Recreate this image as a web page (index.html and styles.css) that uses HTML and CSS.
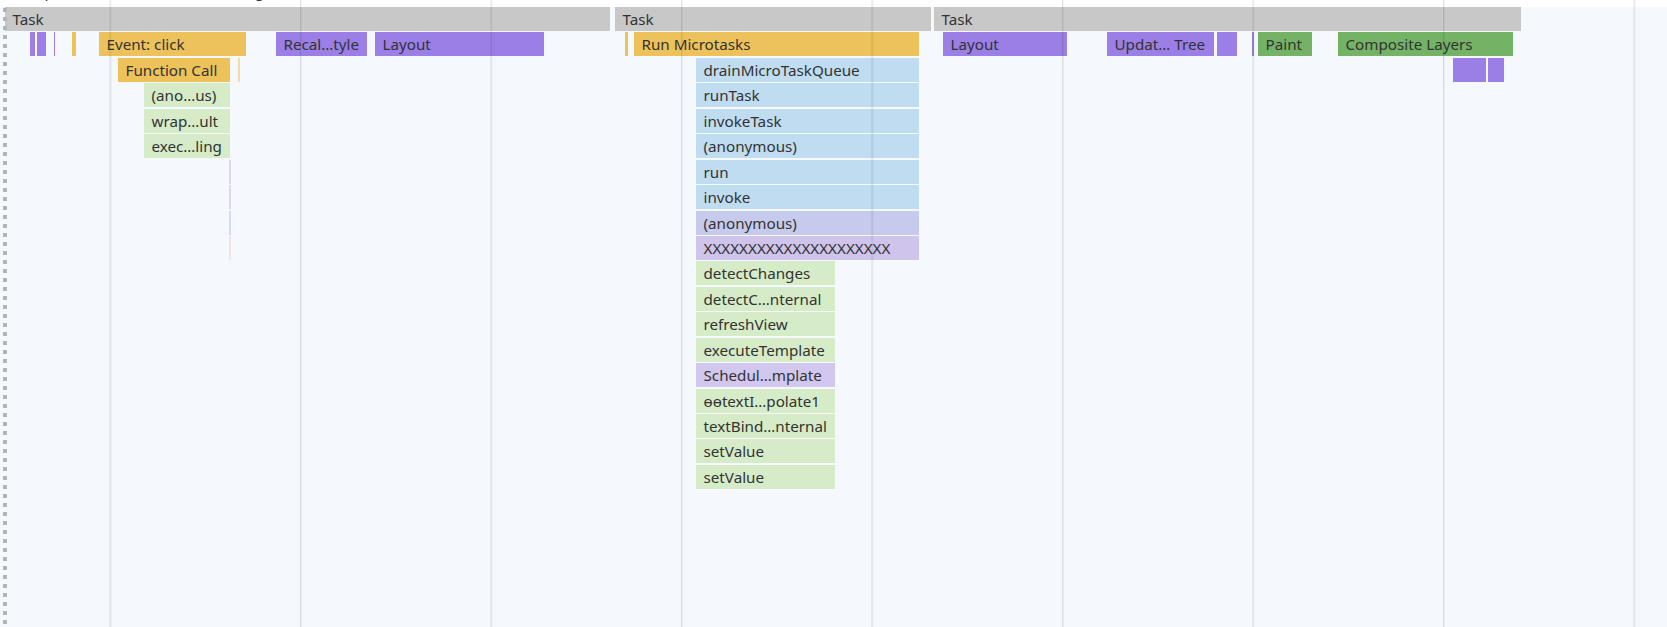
FILE: index.html
```html
<!DOCTYPE html>
<html lang="en">
<head>
  <meta charset="UTF-8">
  <meta name="viewport" content="width=device-width, initial-scale=1">
  <title>Performance - Main</title>
  <link rel="stylesheet" href="styles.css">
</head>
<body>
  <div class="timeline">
    <div class="caption">
      <div class="caption-line">
        <span class="cap-a">Stamp;,</span>
        <span class="cap-b">Total time,</span>
        <span class="cap-c">Loading</span>
      </div>
    </div>
    <div class="chart">
      <div class="rows" id="rows"></div>
    </div>
    <div class="grid"></div>
    <div class="edge"></div>
  </div>
  <script>
    // one array per depth: [start px, end px, kind, label]
    const flame = [
      [[5, 610, "task", "Task"], [615, 931, "task", "Task"], [934, 1521, "task", "Task"]],
      [[30, 35, "render"], [37, 46, "render"], [54, 55, "render"], [72, 76, "script"],
       [99, 246, "script", "Event: click"], [276, 367, "render", "Recal…tyle"], [375, 544, "render", "Layout"],
       [625, 628, "script"], [634, 919, "script", "Run Microtasks"],
       [943, 1067, "render", "Layout"], [1107, 1214, "render", "Updat… Tree"], [1217, 1237, "render"],
       [1252, 1254, "render"], [1258, 1312, "paint", "Paint"], [1338, 1513, "paint", "Composite Layers"]],
      [[118, 230, "script", "Function Call"], [238, 240, "script-faint"], [696, 919, "js", "drainMicroTaskQueue"],
       [1453, 1486, "render"], [1488, 1504, "render"]],
      [[144, 230, "fn", "(ano…us)"], [696, 919, "js", "runTask"]],
      [[144, 230, "fn", "wrap…ult"], [696, 919, "js", "invokeTask"]],
      [[144, 230, "fn", "exec…ling"], [696, 919, "js", "(anonymous)"]],
      [[229, 231, "lilac"], [696, 919, "js", "run"]],
      [[229, 231, "lilac"], [696, 919, "js", "invoke"]],
      [[229, 231, "sky"], [696, 919, "anon", "(anonymous)"]],
      [[229, 231, "rose"], [696, 919, "zone", "XXXXXXXXXXXXXXXXXXXXX"]],
      [[696, 835, "fn", "detectChanges"]],
      [[696, 835, "fn", "detectC…nternal"]],
      [[696, 835, "fn", "refreshView"]],
      [[696, 835, "fn", "executeTemplate"]],
      [[696, 835, "sched", "Schedul…mplate"]],
      [[696, 835, "fn", "ɵɵtextI…polate1"]],
      [[696, 835, "fn", "textBind…nternal"]],
      [[696, 835, "fn", "setValue"]],
      [[696, 835, "fn", "setValue"]]
    ];

    const rows = document.getElementById("rows");
    flame.forEach(depth => {
      const row = document.createElement("div");
      row.className = "row";
      depth.forEach(([start, end, kind, label]) => {
        const bar = document.createElement("div");
        bar.className = "bar " + kind;
        bar.style.left = start + "px";
        bar.style.width = (end - start) + "px";
        if (label) {
          bar.classList.add("named");
          bar.textContent = label;
        }
        row.appendChild(bar);
      });
      rows.appendChild(row);
    });
  </script>
</body>
</html>
```

FILE: styles.css
```css
body {
  margin: 0;
  background-color: #fff;
  font-family: "Noto Sans", "Open Sans", sans-serif;
  font-size: 15.2px;
  color: #333;
}
.timeline {
  position: relative;
  height: 627px;
  overflow: hidden;
}
/* clipped tooltip text above the chart */
.caption {
  height: 7px;
  overflow: hidden;
}
.caption-line {
  display: flex;
  margin-top: -19.5px;
  line-height: 20px;
  white-space: nowrap;
}
.cap-a {
  margin-left: 8px;
}
.cap-b {
  margin-left: 40px;
}
.cap-c {
  margin-left: 30px;
}
.chart {
  height: 620px;
  background-color: #f5f8fd;
}
.rows {
  display: flex;
  flex-direction: column;
  gap: 1.45px;
}
.row {
  position: relative;
  height: 24px;
}
.bar {
  position: absolute;
  top: 0;
  bottom: 0;
  box-sizing: border-box;
  line-height: 24px;
  white-space: nowrap;
  overflow: hidden;
}
.named {
  padding-left: 7.5px;
}
/* bar colours */
.task { background-color: #c8c8c8; }
.script { background-color: #edc25a; }
.script-faint { background-color: #f3dca6; }
.render { background-color: #9b7fe6; }
.paint { background-color: #74b266; }
.js { background-color: #c0dcf1; }
.fn { background-color: #d6ebc8; }
.anon { background-color: #c6caec; }
.zone { background-color: #cfc4ec; }
.sched { background-color: #d2c8ef; }
.lilac { background-color: #ddd7f2; }
.sky { background-color: #d5dcf2; }
.rose { background-color: #f2e4e4; }
/* time grid over the bars */
.grid {
  position: absolute;
  top: 0;
  bottom: 0;
  left: 0;
  right: 0;
  pointer-events: none;
  background-image: linear-gradient(90deg, rgba(0,0,0,0.11) 0 1px, rgba(0,0,0,0.04) 1px 2px, transparent 2px);
  background-size: 190.5px 100%;
  background-position: 109.5px 0;
  background-repeat: repeat-x;
}
.edge {
  position: absolute;
  top: 8px;
  bottom: 0;
  left: 3px;
  width: 4px;
  background-image: repeating-linear-gradient(to bottom, #b3b3b3 0 4px, transparent 4px 9px);
}
```
